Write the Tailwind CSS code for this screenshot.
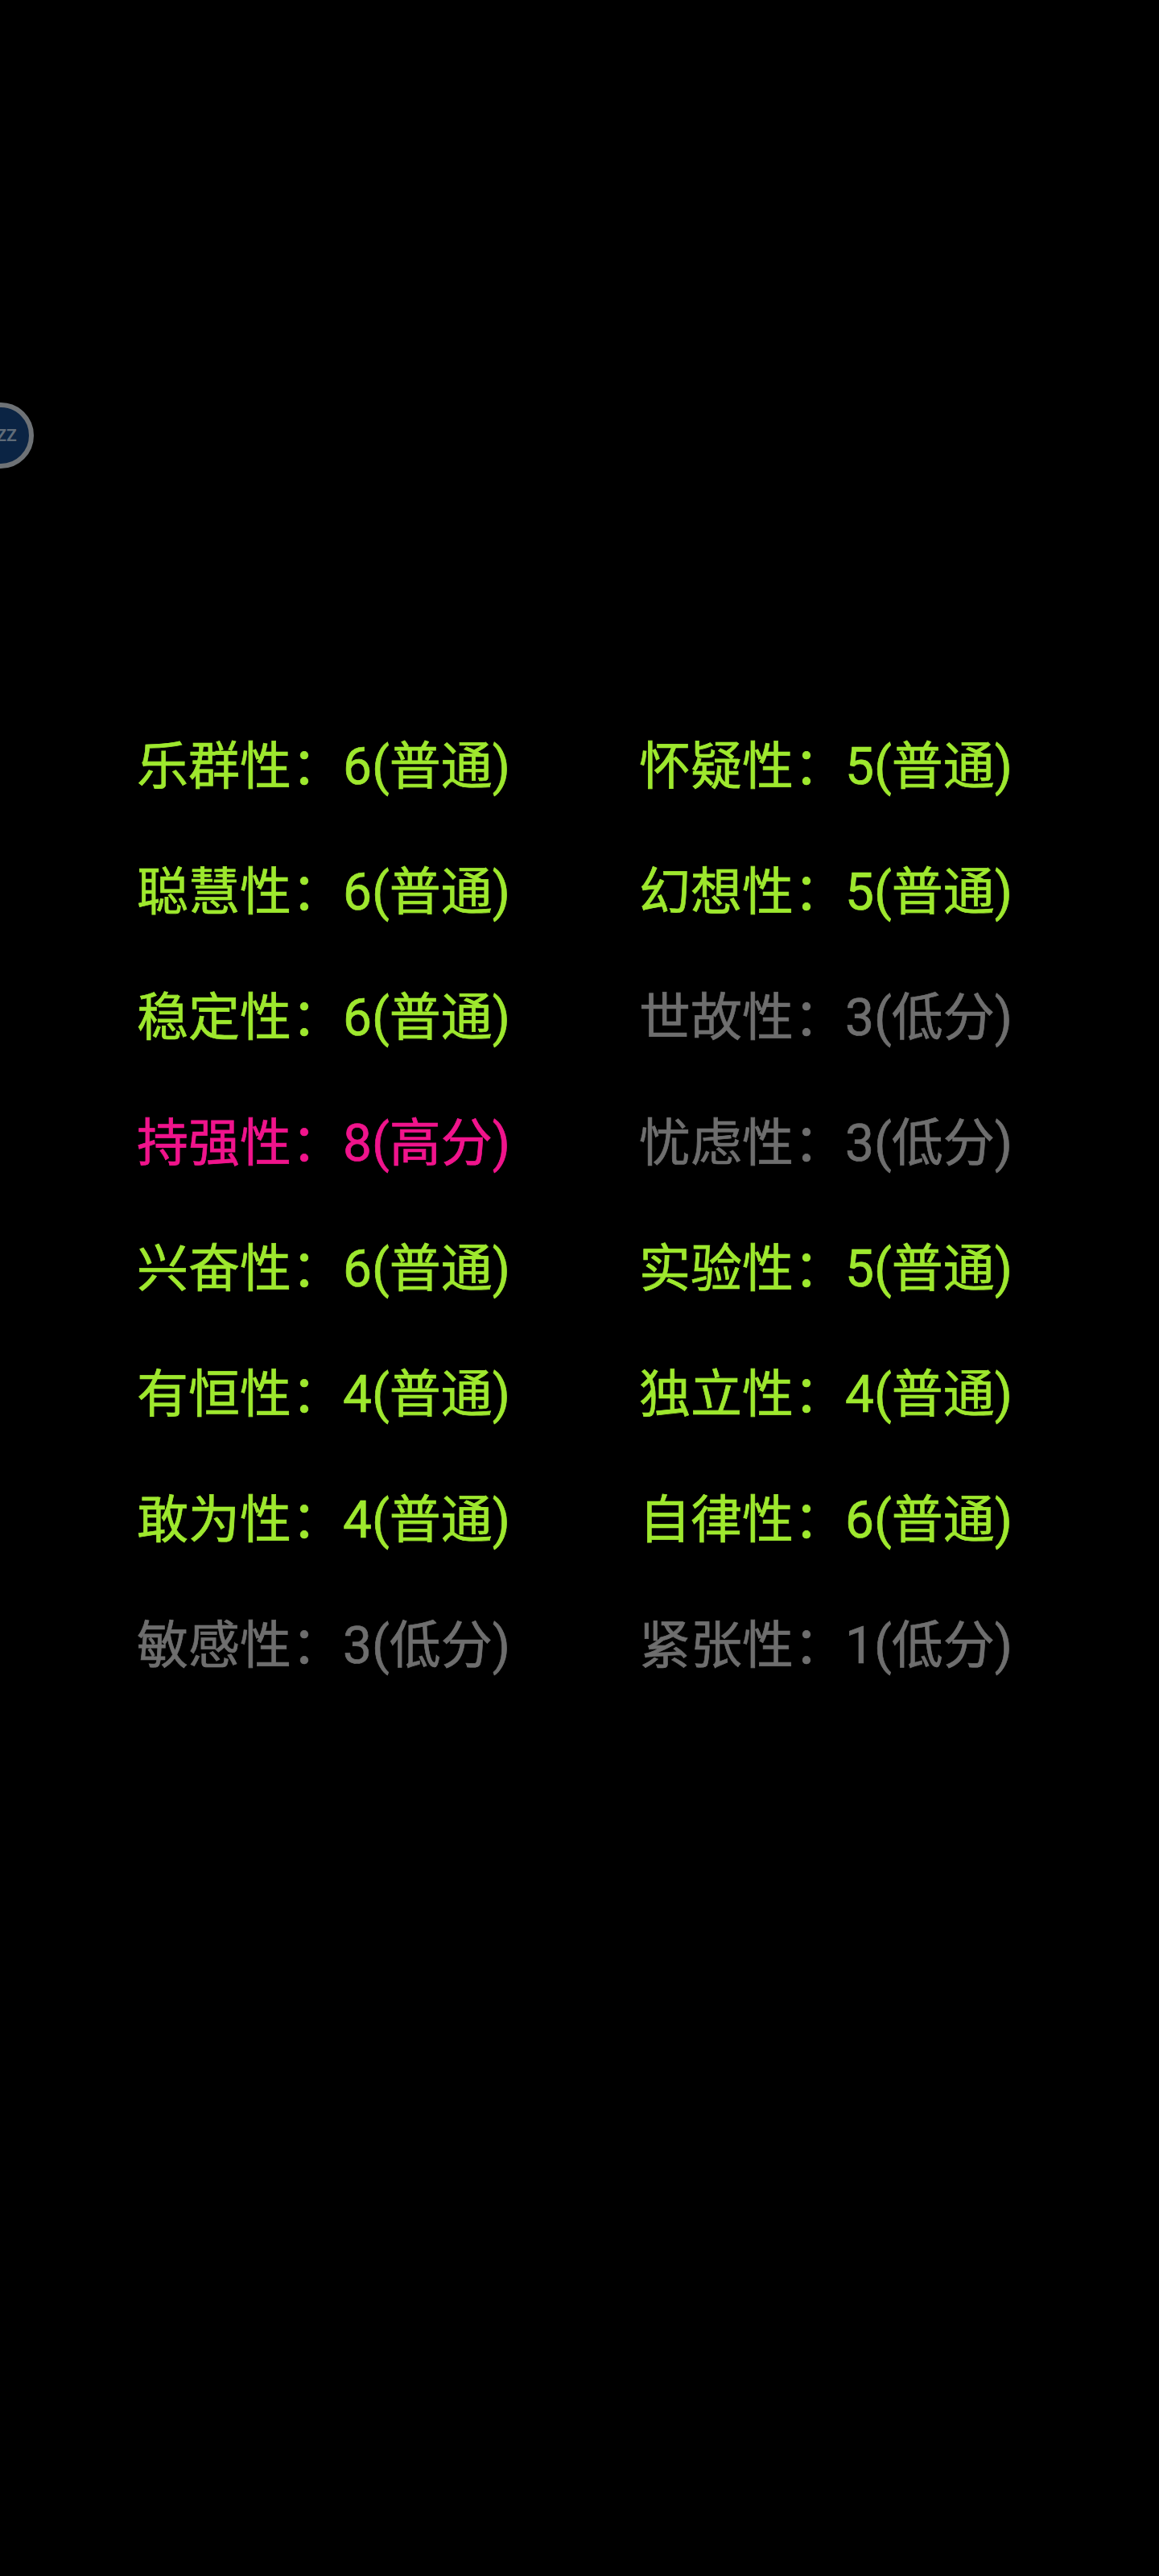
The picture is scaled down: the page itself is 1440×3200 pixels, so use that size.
<!doctype html>
<html><head><meta charset="utf-8"><script src="https://cdn.jsdelivr.net/npm/@tailwindcss/browser@4"></script></head>
<body class="bg-black">
<div class="relative w-[1440px] h-[3200px] bg-black overflow-hidden font-['Roboto','Noto_Sans_CJK_SC',sans-serif] text-[64px] leading-[88px] whitespace-nowrap">
<div class="absolute left-[-40px] top-[500px] w-[82px] h-[82px] rounded-full border-[6px] border-[#6e7276] bg-[#0b2444] flex items-center justify-center pl-[14px] text-[21px] leading-none font-bold text-[#5f6b78]">ZZ</div>
<div class="pt-[909px] pl-[170px] grid grid-cols-[624px_auto] gap-y-[68px] [-webkit-text-stroke:0.7px]">
<div class="text-[#9ee82e]">乐群性：6(普通)</div><div class="text-[#9ee82e]">怀疑性：5(普通)</div>
<div class="text-[#9ee82e]">聪慧性：6(普通)</div><div class="text-[#9ee82e]">幻想性：5(普通)</div>
<div class="text-[#9ee82e]">稳定性：6(普通)</div><div class="text-[#6e6e6e]">世故性：3(低分)</div>
<div class="text-[#f0148c]">持强性：8(高分)</div><div class="text-[#6e6e6e]">忧虑性：3(低分)</div>
<div class="text-[#9ee82e]">兴奋性：6(普通)</div><div class="text-[#9ee82e]">实验性：5(普通)</div>
<div class="text-[#9ee82e]">有恒性：4(普通)</div><div class="text-[#9ee82e]">独立性：4(普通)</div>
<div class="text-[#9ee82e]">敢为性：4(普通)</div><div class="text-[#9ee82e]">自律性：6(普通)</div>
<div class="text-[#6e6e6e]">敏感性：3(低分)</div><div class="text-[#6e6e6e]">紧张性：1(低分)</div>
</div>
</div>
</body></html>
